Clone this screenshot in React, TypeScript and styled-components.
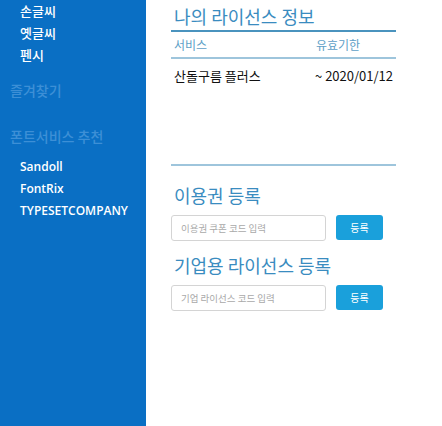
import styled, { createGlobalStyle } from 'styled-components'

const GlobalStyle = createGlobalStyle`
    html, body {
        margin: 0;
        padding: 0;
        height: 100%;
        background: #ffffff;
    }
    #root {
        height: 100%;
    }
    body {
        font-family: 'Noto Sans CJK KR', 'Noto Sans', sans-serif;
    }
`

const fontMenus = ['손글씨', '옛글씨', '펜시']
const partners = ['Sandoll', 'FontRix', 'TYPESETCOMPANY']

const App = () => {
    return (
        <Page>
            <GlobalStyle />
            <Sidebar>
                <MenuList>
                    {fontMenus.map((m) => (
                        <MenuItem key={m}>{m}</MenuItem>
                    ))}
                </MenuList>
                <SectionTitle $top={16}>즐겨찾기</SectionTitle>
                <SectionTitle $top={26}>폰트서비스 추천</SectionTitle>
                <PartnerList>
                    {partners.map((p) => (
                        <PartnerItem key={p}>{p}</PartnerItem>
                    ))}
                </PartnerList>
            </Sidebar>
            <Main>
                <Heading>나의 라이선스 정보</Heading>
                <Table>
                    <HeadRow>
                        <HeadCell>서비스</HeadCell>
                        <HeadCell>유효기한</HeadCell>
                    </HeadRow>
                    <BodyRow>
                        <Cell>산돌구름 플러스</Cell>
                        <Cell>~ 2020/01/12</Cell>
                    </BodyRow>
                </Table>
                <Divider />
                <Heading $gap={17}>이용권 등록</Heading>
                <FormRow>
                    <CodeInput placeholder='이용권 쿠폰 코드 입력' />
                    <SubmitButton>등록</SubmitButton>
                </FormRow>
                <Heading $gap={12}>기업용 라이선스 등록</Heading>
                <FormRow>
                    <CodeInput placeholder='기업 라이선스 코드 입력' />
                    <SubmitButton>등록</SubmitButton>
                </FormRow>
            </Main>
        </Page>
    )
}

export default App

const Page = styled.div`
    display: flex;
    width: 100%;
    min-height: 426px;
    height: 100%;
`

const Sidebar = styled.aside`
    width: 146px;
    flex-shrink: 0;
    background: #0a6fc4;
    display: flex;
    flex-direction: column;
    padding-top: 1px;
    box-sizing: border-box;
`

const MenuList = styled.ul`
    list-style: none;
    margin: 0;
    padding: 0 0 0 20px;
    display: flex;
    flex-direction: column;
    gap: 3px;
`

const MenuItem = styled.li`
    color: #ffffff;
    font-size: 13px;
    font-weight: 500;
    line-height: 19px;
`

const SectionTitle = styled.div<{ $top: number }>`
    margin-top: ${(p) => p.$top}px;
    padding-left: 10px;
    color: #3d8fd6;
    font-size: 14px;
    font-weight: 500;
    line-height: 20px;
`

const PartnerList = styled.ul`
    list-style: none;
    margin: 12px 0 0;
    padding: 0 0 0 20px;
    display: flex;
    flex-direction: column;
    gap: 5px;
`

const PartnerItem = styled.li`
    color: #ffffff;
    font-family: 'Open Sans', 'Noto Sans', sans-serif;
    font-size: 12px;
    font-weight: 600;
    line-height: 17px;
`

const Main = styled.main`
    flex: 1;
    padding: 4px 0 0 25px;
    width: 225px;
    max-width: 225px;
    display: flex;
    flex-direction: column;
`

const Heading = styled.h2<{ $gap?: number }>`
    margin: ${(p) => p.$gap ?? 0}px 0 0;
    padding-left: 3px;
    color: #3a8cc0;
    font-size: 18px;
    font-weight: 400;
    line-height: 24px;
`

const Table = styled.div`
    margin-top: 2px;
    border-top: 2px solid #4a93be;
    display: flex;
    flex-direction: column;
    height: 132px;
`

const HeadRow = styled.div`
    display: grid;
    grid-template-columns: 142px 1fr;
    padding: 4px 3px 0;
    height: 21px;
    border-bottom: 2px solid #9ec5dc;
`

const HeadCell = styled.div`
    color: #5e9fc7;
    font-size: 12px;
    line-height: 18px;
`

const BodyRow = styled.div`
    display: grid;
    grid-template-columns: 141px 1fr;
    padding: 7px 3px 0;
`

const Cell = styled.div`
    color: #111111;
    font-size: 13px;
    line-height: 20px;
    white-space: nowrap;
`

const Divider = styled.hr`
    margin: 0;
    border: none;
    border-top: 2px solid #9ec5dc;
`

const FormRow = styled.div`
    display: flex;
    align-items: flex-start;
    gap: 10px;
    margin-top: 8px;
`

const CodeInput = styled.input`
    width: 155px;
    height: 26px;
    box-sizing: border-box;
    border: 1px solid #d4d4d4;
    border-radius: 3px;
    padding: 0 9px;
    font-family: 'Noto Sans CJK KR', sans-serif;
    font-size: 9.5px;
    color: #333;
    outline: none;
    &::placeholder {
        color: #a9a9a9;
    }
`

const SubmitButton = styled.button`
    width: 47px;
    height: 25px;
    border: none;
    border-radius: 3px;
    background: #1aa0db;
    color: #ffffff;
    font-family: 'Noto Sans CJK KR', sans-serif;
    font-size: 10px;
    cursor: pointer;
`
